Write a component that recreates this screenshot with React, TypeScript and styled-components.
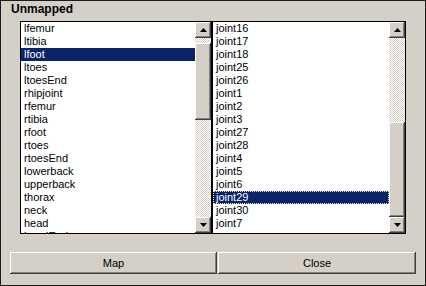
import React from "react";
import styled, { createGlobalStyle } from "styled-components";

const GlobalStyle = createGlobalStyle`
  html, body {
    margin: 0;
    padding: 0;
    background: #d4d0c8;
  }
  body {
    font-family: "Liberation Sans", Arial, sans-serif;
    font-size: 11px;
    color: #000;
  }
`;

const Frame = styled.div`
  box-sizing: border-box;
  width: 426px;
  height: 286px;
  border: 1px solid #1c1c1c;
  background: #d4d0c8;
  display: flex;
  flex-direction: column;
  padding-top: 1px;
`;

const Title = styled.div`
  height: 14px;
  line-height: 14px;
  padding-left: 10px;
  font-weight: bold;
  font-size: 12px;
`;

const ListRow = styled.div`
  display: flex;
  margin-top: 5px;
  padding-left: 19px;
`;

const ListBox = styled.div<{ $width: number }>`
  box-sizing: border-box;
  width: ${(p) => p.$width}px;
  height: 213px;
  border: 1px solid #000;
  background: #fff;
  display: flex;
  overflow: hidden;
`;

const Items = styled.div`
  flex: 1;
  min-width: 0;
  display: flex;
  flex-direction: column;
`;

const Item = styled.div<{ $selected?: boolean; $focused?: boolean }>`
  box-sizing: border-box;
  height: 13px;
  flex: none;
  line-height: 13px;
  padding-left: 3px;
  white-space: nowrap;
  background: ${(p) => (p.$selected ? "#0a246a" : "transparent")};
  color: ${(p) => (p.$selected ? "#fff" : "#000")};
  outline: ${(p) => (p.$focused ? "1px dotted #f0e8a0" : "none")};
  outline-offset: -1px;
`;

const ScrollBar = styled.div`
  width: 16px;
  flex: none;
  display: flex;
  flex-direction: column;
`;

const raised = `
  background: #d4d0c8;
  box-shadow: inset -1px -1px #404040, inset 1px 1px #fff,
    inset -2px -2px #808080, inset 2px 2px #d4d0c8;
`;

const ArrowButton = styled.div`
  ${raised}
  height: 16px;
  flex: none;
  display: flex;
  align-items: center;
  justify-content: center;
`;

const Track = styled.div`
  flex: 1;
  display: flex;
  flex-direction: column;
  background: repeating-conic-gradient(#d4d0c8 0 25%, #fff 0 50%) 0 0 / 2px 2px;
`;

const Thumb = styled.div`
  ${raised}
  flex: none;
`;

const ButtonRow = styled.div`
  display: flex;
  gap: 1px;
  margin-top: 18px;
  padding-left: 9px;
`;

const PushButton = styled.div<{ $width: number }>`
  ${raised}
  box-sizing: border-box;
  width: ${(p) => p.$width}px;
  height: 22px;
  line-height: 22px;
  text-align: center;
  font-size: 11px;
`;

function Arrow({ up }: { up?: boolean }) {
  return (
    <svg width="7" height="4" viewBox="0 0 7 4">
      <path d={up ? "M3.5 0 L7 4 L0 4 Z" : "M0 0 L7 0 L3.5 4 Z"} fill="#000" />
    </svg>
  );
}

function Scroller({ top, size }: { top: number; size: number }) {
  return (
    <ScrollBar>
      <ArrowButton>
        <Arrow up />
      </ArrowButton>
      <Track>
        <div style={{ height: top, flex: "none" }} />
        <Thumb style={{ height: size }} />
      </Track>
      <ArrowButton>
        <Arrow />
      </ArrowButton>
    </ScrollBar>
  );
}

const leftItems = [
  "lfemur", "ltibia", "lfoot", "ltoes", "ltoesEnd", "rhipjoint", "rfemur",
  "rtibia", "rfoot", "rtoes", "rtoesEnd", "lowerback", "upperback", "thorax",
  "neck", "head", "headEnd",
];

const rightItems = [
  "joint16", "joint17", "joint18", "joint25", "joint26", "joint1", "joint2",
  "joint3", "joint27", "joint28", "joint4", "joint5", "joint6", "joint29",
  "joint30", "joint7",
];

export default function App() {
  return (
    <>
      <GlobalStyle />
      <Frame>
        <Title>Unmapped</Title>
        <ListRow>
          <ListBox $width={192}>
            <Items>
              {leftItems.map((name) => (
                <Item key={name} $selected={name === "lfoot"}>
                  {name}
                </Item>
              ))}
            </Items>
            <Scroller top={5} size={77} />
          </ListBox>
          <ListBox $width={194}>
            <Items>
              {rightItems.map((name) => (
                <Item key={name} $selected={name === "joint29"} $focused={name === "joint29"}>
                  {name}
                </Item>
              ))}
            </Items>
            <Scroller top={84} size={95} />
          </ListBox>
        </ListRow>
        <ButtonRow>
          <PushButton $width={207}>Map</PushButton>
          <PushButton $width={198}>Close</PushButton>
        </ButtonRow>
      </Frame>
    </>
  );
}
